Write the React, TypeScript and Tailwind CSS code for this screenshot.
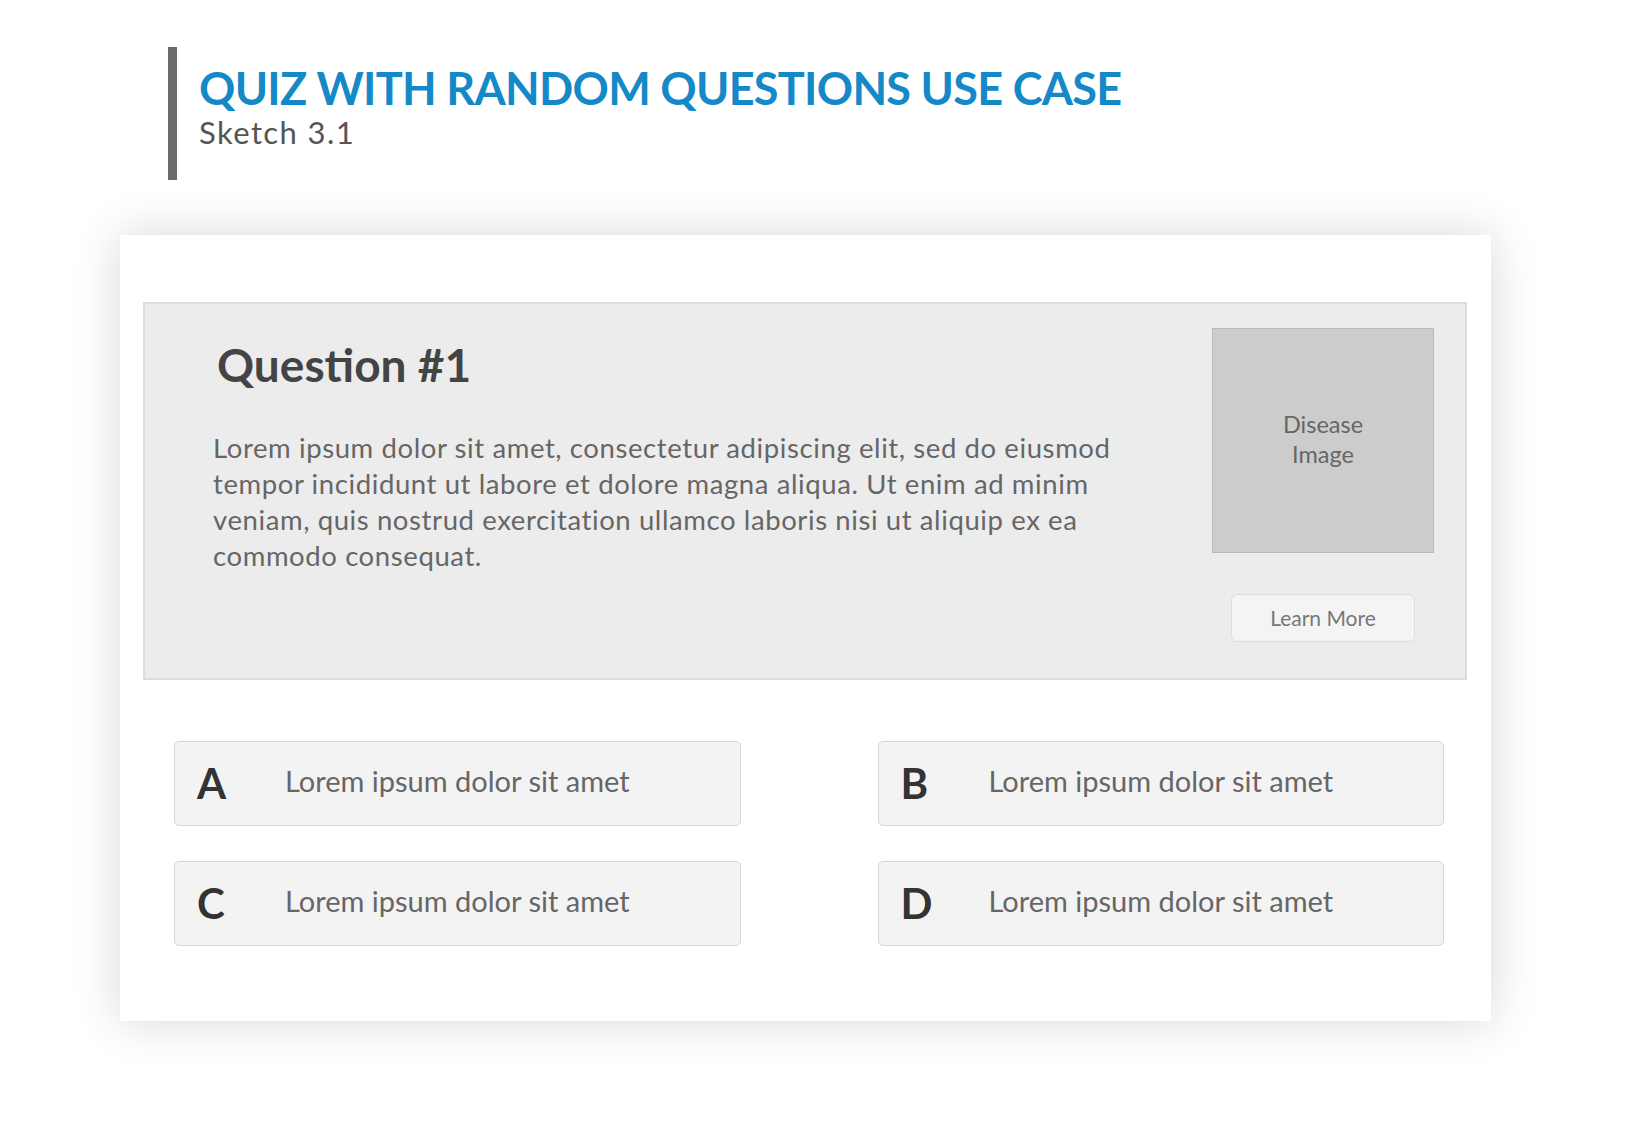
const options = [
  { key: "A", text: "Lorem ipsum dolor sit amet" },
  { key: "B", text: "Lorem ipsum dolor sit amet" },
  { key: "C", text: "Lorem ipsum dolor sit amet" },
  { key: "D", text: "Lorem ipsum dolor sit amet" },
];

function OptionBox({ letter, text }: { letter: string; text: string }) {
  return (
    <div className="flex h-[85px] items-center rounded-[5px] border border-[#d6d6d6] bg-[#f4f3f4]">
      <span className="w-[110px] pl-[22px] text-[42px] font-bold text-[#333333]">{letter}</span>
      <span className="mb-[6px] text-[29px] text-[#666666]">{text}</span>
    </div>
  );
}

export default function App() {
  return (
    <div className="min-h-screen w-full bg-white font-['Lato',sans-serif]">
      <header className="ml-[168px] flex pt-[47px]">
        <div className="h-[133px] w-[9px] bg-[#6b6b6b]" />
        <div className="pl-[22px] pt-[15px]">
          <h1 className="text-[45px] font-bold leading-[52px] tracking-[-0.7px] text-[#1589c8]">
            QUIZ WITH RANDOM QUESTIONS USE CASE
          </h1>
          <p className="text-[31px] leading-[36px] tracking-[1.4px] text-[#555555]">Sketch 3.1</p>
        </div>
      </header>

      <main className="ml-[120px] mt-[55px] w-[1371px] bg-white pb-[75px] pt-[67px] shadow-[0_0_45px_rgba(0,0,0,0.16)]">
        <section className="ml-[23px] flex h-[378px] w-[1324px] border-2 border-[#dcdcdc] bg-[#edeced]">
          <div className="flex-1 pl-[68px] pt-[33px]">
            <h2 className="pl-[4px] text-[46px] font-bold leading-[56px] text-[#444444]">Question #1</h2>
            <p className="mt-[37px] text-[27.5px] leading-[36px] tracking-[0.6px] text-[#666666]">
              Lorem ipsum dolor sit amet, consectetur adipiscing elit, sed do eiusmod
              <br />
              tempor incididunt ut labore et dolore magna aliqua. Ut enim ad minim
              <br />
              veniam, quis nostrud exercitation ullamco laboris nisi ut aliquip ex ea
              <br />
              commodo consequat.
            </p>
          </div>
          <div className="flex w-[253px] flex-col items-center pr-[31px] pt-[24px]">
            <div className="flex h-[225px] w-[222px] items-center justify-center border border-[#b9b9b9] bg-[#cccccc] pb-[4px] text-center text-[23.5px] leading-[30px] text-[#666666]">
              Disease
              <br />
              Image
            </div>
            <button className="mt-[41px] h-[48px] w-[184px] rounded-[6px] border border-[#dddddd] bg-[#f5f4f5] text-[21px] text-[#777777]">
              Learn More
            </button>
          </div>
        </section>

        <div className="ml-[54px] mt-[61px] grid w-[1270px] grid-cols-2 gap-x-[137px] gap-y-[35px]">
          {options.map((o) => (
            <OptionBox key={o.key} letter={o.key} text={o.text} />
          ))}
        </div>
      </main>
    </div>
  );
}
